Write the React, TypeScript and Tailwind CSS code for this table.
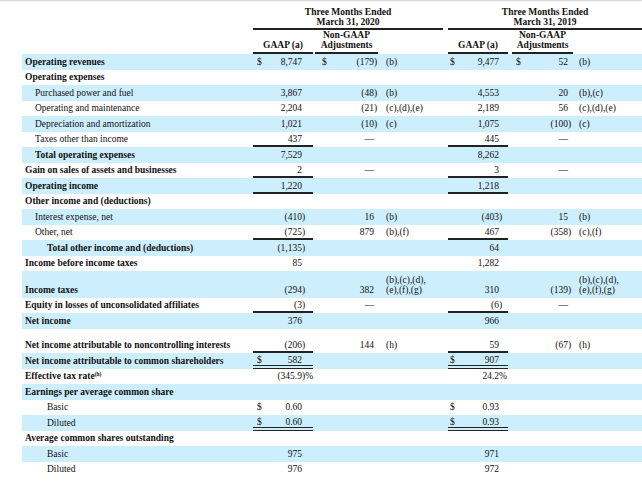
import type { ReactNode } from "react";

const cols = "grid grid-cols-[231px_60px_2px_63px_65px_5px_60px_4px_61px_1fr]";
const line = "border-b-2 border-[#222]";
const dbl = "border-b-4 border-double border-[#222]";

type Row = {
  label: ReactNode;
  bold?: boolean;
  indent?: 0 | 1 | 2;
  blue?: boolean;
  h?: string;
  g20?: string;
  n20?: string;
  f20?: string;
  g19?: string;
  n19?: string;
  f19?: string;
  d?: boolean; // $ in GAAP columns
  dn?: boolean; // $ in non-GAAP columns
  rule?: "single" | "double";
};

const rows: Row[] = [
  { label: "Operating revenues", bold: true, blue: true, g20: "8,747", n20: "(179)", f20: "(b)", g19: "9,477", n19: "52", f19: "(b)", d: true, dn: true },
  { label: "Operating expenses", bold: true },
  { label: "Purchased power and fuel", indent: 1, blue: true, g20: "3,867", n20: "(48)", f20: "(b)", g19: "4,553", n19: "20", f19: "(b),(c)" },
  { label: "Operating and maintenance", indent: 1, g20: "2,204", n20: "(21)", f20: "(c),(d),(e)", g19: "2,189", n19: "56", f19: "(c),(d),(e)" },
  { label: "Depreciation and amortization", indent: 1, blue: true, g20: "1,021", n20: "(10)", f20: "(c)", g19: "1,075", n19: "(100)", f19: "(c)" },
  { label: "Taxes other than income", indent: 1, g20: "437", n20: "—", g19: "445", n19: "—", rule: "single" },
  { label: "Total operating expenses", bold: true, indent: 1, blue: true, g20: "7,529", g19: "8,262" },
  { label: "Gain on sales of assets and businesses", bold: true, g20: "2", n20: "—", g19: "3", n19: "—", rule: "single" },
  { label: "Operating income", bold: true, blue: true, g20: "1,220", g19: "1,218", rule: "single" },
  { label: "Other income and (deductions)", bold: true },
  { label: "Interest expense, net", indent: 1, blue: true, g20: "(410)", n20: "16", f20: "(b)", g19: "(403)", n19: "15", f19: "(b)" },
  { label: "Other, net", indent: 1, g20: "(725)", n20: "879", f20: "(b),(f)", g19: "467", n19: "(358)", f19: "(c),(f)", rule: "single" },
  { label: "Total other income and (deductions)", bold: true, indent: 2, blue: true, g20: "(1,135)", g19: "64" },
  { label: "Income before income taxes", bold: true, g20: "85", g19: "1,282" },
  { label: "Income taxes", bold: true, blue: true, h: "h-[27px]", g20: "(294)", n20: "382", f20: "(b),(c),(d),\n(e),(f),(g)", g19: "310", n19: "(139)", f19: "(b),(c),(d),\n(e),(f),(g)" },
  { label: "Equity in losses of unconsolidated affiliates", bold: true, g20: "(3)", n20: "—", g19: "(6)", n19: "—", rule: "single" },
  { label: "Net income", bold: true, blue: true, g20: "376", g19: "966" },
  { label: "Net income attributable to noncontrolling interests", bold: true, h: "h-[24px]", g20: "(206)", n20: "144", f20: "(h)", g19: "59", n19: "(67)", f19: "(h)", rule: "single" },
  { label: "Net income attributable to common shareholders", bold: true, blue: true, g20: "582", g19: "907", d: true, rule: "double" },
  {
    label: (
      <>
        Effective tax rate
        <span className="relative -top-[3px] text-[5.5px] leading-none">(h)</span>
      </>
    ),
    bold: true,
    g20: "(345.9)%",
    g19: "24.2%",
  },
  { label: "Earnings per average common share", bold: true, blue: true },
  { label: "Basic", indent: 2, g20: "0.60", g19: "0.93", d: true },
  { label: "Diluted", indent: 2, blue: true, g20: "0.60", g19: "0.93", d: true, rule: "double" },
  { label: "Average common shares outstanding", bold: true },
  { label: "Basic", indent: 2, blue: true, g20: "975", g19: "971" },
  { label: "Diluted", indent: 2, g20: "976", g19: "972" },
];

function split(v: string) {
  const m = v.match(/^(.*?)([)%]+)$/);
  return m ? [m[1], m[2]] : [v, ""];
}

function Num({ v, dollar, pad, rule }: { v?: string; dollar?: boolean; pad: string; rule?: string }) {
  const [body, tail] = split(v ?? "");
  const pb = rule === line ? "pb-[1px]" : rule === dbl ? "pb-0" : "pb-[3px]";
  return (
    <div className={`flex items-end justify-between ${pad} ${pb} ${rule ?? ""}`}>
      <span>{dollar ? "$" : ""}</span>
      <span className="whitespace-nowrap">
        {body}
        <span className="inline-block w-[4px] whitespace-nowrap">{tail}</span>
      </span>
    </div>
  );
}

function Note({ v, pad }: { v?: string; pad: string }) {
  return <div className={`flex items-end whitespace-pre-line pb-[3px] ${pad}`}>{v}</div>;
}

function DataRow({ r }: { r: Row }) {
  const h = r.h ?? (r.blue ? "h-[16px]" : "h-[15px]");
  const indent = r.indent === 2 ? "pl-[25px]" : r.indent === 1 ? "pl-[13px]" : "pl-[3px]";
  const rule = r.rule === "double" ? dbl : r.rule === "single" ? line : undefined;
  return (
    <div className={`${cols} ${h} ${r.blue ? "bg-[#cdeefd]" : ""}`}>
      <div className={`flex items-end whitespace-nowrap pb-[3px] ${indent} ${r.bold ? "font-bold" : ""}`}>
        <span>{r.label}</span>
      </div>
      <Num v={r.g20} dollar={r.d} pad="pl-[4px] pr-[7px]" rule={rule} />
      <div />
      <Num v={r.n20} dollar={r.dn} pad="pl-[7px] pr-0" />
      <Note v={r.f20} pad="pl-[8px]" />
      <div />
      <Num v={r.g19} dollar={r.d} pad="pl-[2px] pr-[5px]" rule={rule} />
      <div />
      <Num v={r.n19} dollar={r.dn} pad="pl-[4px] pr-[1px]" />
      <Note v={r.f19} pad="pl-[6px]" />
    </div>
  );
}

export default function App() {
  return (
    <div className="w-[642px] h-[490px] overflow-hidden bg-white font-['Liberation_Serif',serif] text-[9.5px] leading-[10px] text-[#111]">
      <div className="h-[2px] bg-gradient-to-b from-[#d4d4d4] to-white" />
      <div className="pl-[22px]">
        {/* period headers */}
        <div className={`${cols} h-[28px] font-bold`}>
          <div />
          <div className={`col-span-4 flex flex-col items-center justify-end pb-[1px] text-center ${line}`}>
            <span>Three Months Ended</span>
            <span>March 31, 2020</span>
          </div>
          <div />
          <div className={`col-span-4 flex flex-col items-center justify-end pb-[1px] text-center ${line}`}>
            <span>Three Months Ended</span>
            <span>March 31, 2019</span>
          </div>
        </div>

        {/* column headers */}
        <div className={`${cols} h-[24px] font-bold`}>
          <div />
          <div className={`flex items-end justify-center pb-[2px] ${line}`}>GAAP (a)</div>
          <div />
          <div className={`flex flex-col items-center justify-end pb-[2px] ${line}`}>
            <span>Non-GAAP</span>
            <span>Adjustments</span>
          </div>
          <div />
          <div />
          <div className={`flex items-end justify-center pb-[2px] ${line}`}>GAAP (a)</div>
          <div />
          <div className={`flex flex-col items-center justify-end pb-[2px] ${line}`}>
            <span>Non-GAAP</span>
            <span>Adjustments</span>
          </div>
          <div />
        </div>

        {rows.map((r, i) => (
          <DataRow key={i} r={r} />
        ))}
      </div>
    </div>
  );
}
